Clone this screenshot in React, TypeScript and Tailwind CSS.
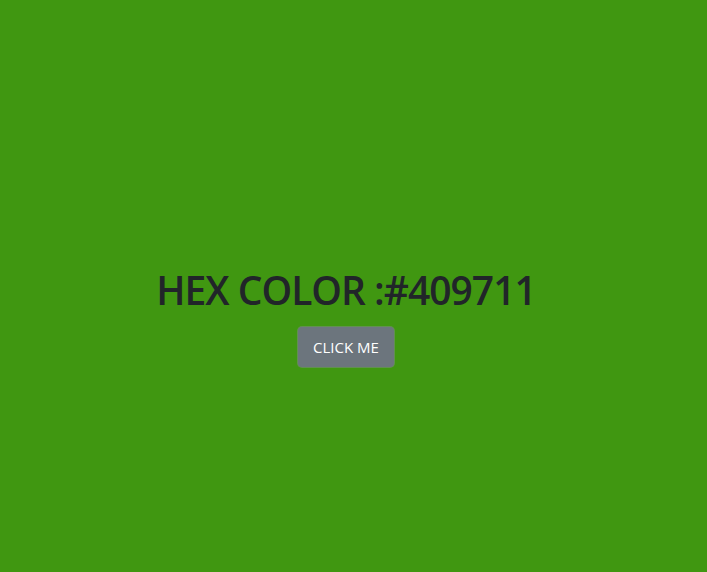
export default function App() {
  return (
    <div className="flex min-h-screen w-full flex-col items-center bg-[#409711] pr-[15px] pt-[266px] font-['Open_Sans',sans-serif]">
      <h1 className="mb-[13px] text-[39px] font-semibold leading-[48px] tracking-[-1px] text-[#212529]">
        HEX COLOR :#409711
      </h1>
      <button
        type="button"
        className="h-[40px] rounded-[4px] bg-[#6c757d] px-[15px] text-[15px] text-white shadow-[0_0_0_1px_rgba(130,138,145,0.5)]"
      >
        CLICK ME
      </button>
    </div>
  );
}
